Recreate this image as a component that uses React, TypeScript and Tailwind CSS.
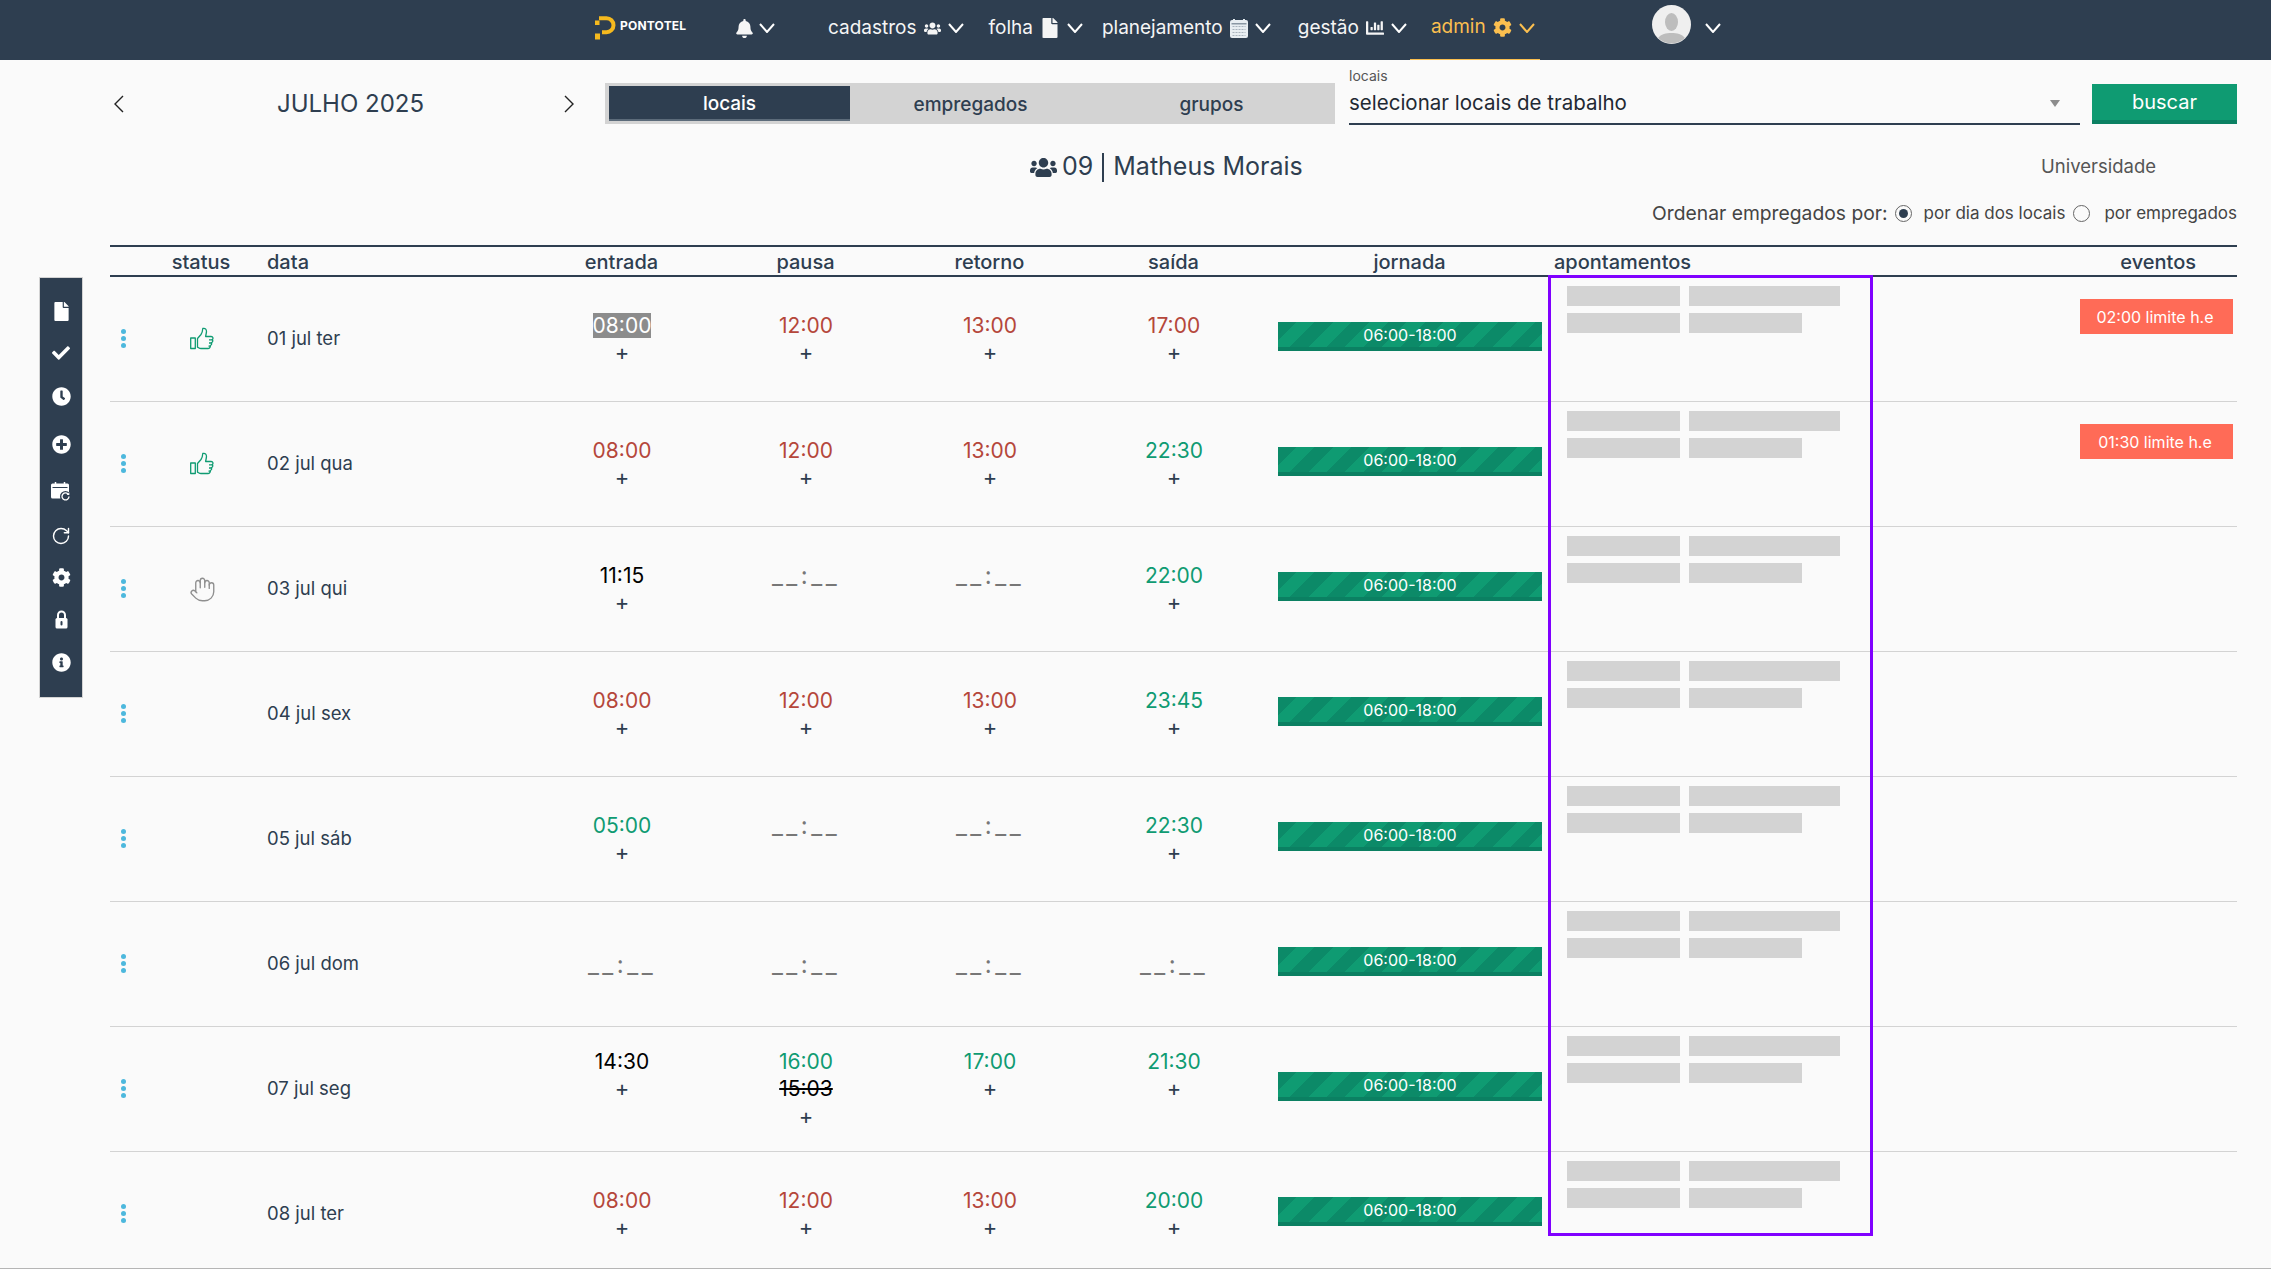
import { Hand, RotateCw } from "lucide-react";
import {
  FaBell,
  FaChartBar,
  FaCheck,
  FaClock,
  FaCog,
  FaFile,
  FaInfoCircle,
  FaPlusCircle,
  FaUsers,
} from "react-icons/fa";

type Tone = "red" | "green" | "black" | "mark" | "none";
type Cell = { t: string; tone: Tone; struck?: string };

const r = (t: string): Cell => ({ t, tone: "red" });
const g = (t: string): Cell => ({ t, tone: "green" });
const k = (t: string): Cell => ({ t, tone: "black" });
const dash: Cell = { t: "__:__", tone: "none" };

const rows: { date: string; status?: "ok" | "hand"; cells: Cell[]; event?: string }[] = [
  { date: "01 jul ter", status: "ok", cells: [{ t: "08:00", tone: "mark" }, r("12:00"), r("13:00"), r("17:00")], event: "02:00 limite h.e" },
  { date: "02 jul qua", status: "ok", cells: [r("08:00"), r("12:00"), r("13:00"), g("22:30")], event: "01:30 limite h.e" },
  { date: "03 jul qui", status: "hand", cells: [k("11:15"), dash, dash, g("22:00")] },
  { date: "04 jul sex", cells: [r("08:00"), r("12:00"), r("13:00"), g("23:45")] },
  { date: "05 jul sáb", cells: [g("05:00"), dash, dash, g("22:30")] },
  { date: "06 jul dom", cells: [dash, dash, dash, dash] },
  { date: "07 jul seg", cells: [k("14:30"), { t: "16:00", tone: "green", struck: "15:03" }, g("17:00"), g("21:30")] },
  { date: "08 jul ter", cells: [r("08:00"), r("12:00"), r("13:00"), g("20:00")] },
];

const toneClass: Record<Tone, string> = {
  red: "text-[#b5473b]",
  green: "text-[#0f9b72]",
  black: "text-black",
  mark: "text-white bg-[#8c8c8c]",
  none: "text-[#777777] text-[24px] tracking-[3.5px]",
};

function Chevron({ className = "text-white" }: { className?: string }) {
  return (
    <svg width="16" height="10" viewBox="0 0 16 10" className={className}>
      <polyline points="1,1 8,9 15,1" fill="none" stroke="currentColor" strokeWidth="2" />
    </svg>
  );
}

function Logo() {
  return (
    <svg width="21" height="24" viewBox="0 0 21 24">
      <path d="M4 2.2H11.5a7 7 0 0 1 0 14H7" fill="none" stroke="#f5b91e" strokeWidth="4" />
      <rect x="0" y="4.5" width="4.5" height="4.5" fill="#f5b91e" />
      <rect x="0" y="17.5" width="5" height="6" fill="#f5b91e" />
    </svg>
  );
}

function Avatar() {
  return (
    <svg width="39" height="39" viewBox="0 0 39 39">
      <circle cx="19.5" cy="19.5" r="19.5" fill="#efefef" />
      <ellipse cx="19.5" cy="17" rx="6.5" ry="9" fill="#bdbdbd" />
      <path d="M6 33c3-4 8-5 13.5-5S30 29 33 33a19.5 19.5 0 0 1-27 0z" fill="#bdbdbd" />
    </svg>
  );
}

function NavCalendar() {
  return (
    <svg width="18" height="19" viewBox="0 0 18 19">
      <rect x="0" y="1" width="18" height="18" rx="2" fill="#e8eef2" />
      <rect x="1.5" y="4" width="15" height="1.5" fill="#8a97a3" />
      <path d="M4 0v3M14 0v3" stroke="#e8eef2" strokeWidth="2" />
      <path
        d="M2.5 7.5h13M2.5 10.5h13M2.5 13.5h13M2.5 16.5h13"
        stroke="#a8b3bd"
        strokeWidth="1"
        strokeDasharray="2 1"
      />
    </svg>
  );
}

function ThumbUp() {
  return (
    <svg width="24" height="24" viewBox="0 0 24 24" fill="none" stroke="#0f9b72" strokeWidth="1.3" strokeLinejoin="round">
      <rect x="0.7" y="11" width="4.6" height="10.5" />
      <path d="M7.5 11.5 11 7.5c1.2-1.6 1.6-3.5 1.8-6 2.6-.6 4 1 3.6 4l-.8 4h5.6c1.8 0 2.4 2 1 3 1 1.2.6 2.6-.8 3.2.6 1.3 0 2.4-1.2 2.8.3 1.6-.6 3-2.3 3H11c-1.5 0-2.3-.8-3.5-1.3z" />
      <path d="M19 12.8h3.2M19 16h2.8M18.5 19.2h2.3" />
    </svg>
  );
}

function NavItem({ label, icon }: { label: string; icon: React.ReactNode }) {
  return (
    <div className="flex items-center gap-[7px] text-[19px] text-[#f5f5f5]">
      <span>{label}</span>
      {icon}
      <Chevron />
    </div>
  );
}

function Sidebar() {
  return (
    <div className="absolute left-[39px] top-[277px] w-[44px] h-[421px] bg-[#2e3e50] border border-[#d3d3d3] flex flex-col items-center text-white">
      <FaFile className="mt-[24px] text-[19px]" />
      <FaCheck className="mt-[23px] text-[18px]" />
      <FaClock className="mt-[25px] text-[19px]" />
      <FaPlusCircle className="mt-[29px] text-[19px]" />
      <svg width="20" height="20" viewBox="0 0 20 20" className="mt-[28px]">
        <rect x="0" y="1.5" width="18" height="15" rx="1.5" fill="white" />
        <rect x="1.5" y="5" width="15" height="1" fill="#2e3e50" />
        <path d="M4.5 0v3M13.5 0v3" stroke="white" strokeWidth="1.5" />
        <circle cx="14.5" cy="14.5" r="5.5" fill="#2e3e50" />
        <path d="M18 14.500a3.500 3.500 0 1 1-1-2.500" fill="none" stroke="white" strokeWidth="1.3" />
        <path d="M18.300 10.300v2.700h-2.700z" fill="white" />
      </svg>
      <RotateCw size={20} strokeWidth={1.7} className="mt-[24px]" />
      <FaCog className="mt-[22px] text-[19px]" />
      <svg width="13" height="19" viewBox="0 0 13 19" className="mt-[23px]">
        <path d="M3 9V5a3.500 3.500 0 0 1 7 0v4" fill="none" stroke="white" strokeWidth="2" />
        <rect x="0.5" y="8" width="12" height="10.5" rx="1.5" fill="white" />
        <rect x="5.5" y="11" width="2" height="4.5" rx="1" fill="#2e3e50" />
      </svg>
      <FaInfoCircle className="mt-[24px] text-[19px]" />
    </div>
  );
}

function Time({ cell }: { cell: Cell }) {
  const isDash = cell.tone === "none";
  return (
    <div className="flex flex-col items-center pl-[2px] leading-[28px] text-[21px]">
      <span className={`h-[25px] leading-[25px] mt-[1.5px] mb-[1.5px] ${toneClass[cell.tone]}`}>{cell.t}</span>
      {cell.struck && <span className="text-black line-through decoration-2">{cell.struck}</span>}
      {!isDash && <span className="text-[#2e3e50] text-[22px] -mt-[1px] mb-[1px]">+</span>}
    </div>
  );
}

function Row({ date, status, cells, event }: (typeof rows)[number]) {
  return (
    <div className="grid grid-cols-[26px_130px_263px_736px_284px_324px_364px] items-center h-[125px] shrink-0 border-b border-[#d3d3d3]">
      <div className="flex flex-col items-center gap-[2px] mb-[2px]">
        <span className="w-[5px] h-[5px] rounded-full bg-[#4db8dd]" />
        <span className="w-[5px] h-[5px] rounded-full bg-[#4db8dd]" />
        <span className="w-[5px] h-[5px] rounded-full bg-[#4db8dd]" />
      </div>
      <div className="flex justify-center pl-[2px]">
        {status === "ok" && <ThumbUp />}
        {status === "hand" && <Hand size={27} strokeWidth={1.2} className="text-[#8f8f8f]" />}
      </div>
      <div className="text-[18.5px] text-[#2e3e50] pl-[1px]">{date}</div>
      <div className="grid grid-cols-4 items-start">
        {cells.map((c, i) => (
          <Time key={i} cell={c} />
        ))}
      </div>
      <div className="self-start mt-[45px] ml-[13px] w-[264px] h-[29px] border-b-4 border-[#0b8062] flex items-center justify-center text-[16px] text-white bg-[repeating-linear-gradient(135deg,#0c8a68_0,#0c8a68_13px,#0f9b72_13px,#0f9b72_26px)]">
        06:00-18:00
      </div>
      <div className="self-start mt-[9px] ml-[18px] flex flex-col gap-[7px]">
        <div className="flex gap-[9px]">
          <div className="w-[113px] h-[20px] bg-[#d3d3d3]" />
          <div className="w-[151px] h-[20px] bg-[#d3d3d3]" />
        </div>
        <div className="flex gap-[9px]">
          <div className="w-[113px] h-[20px] bg-[#d3d3d3]" />
          <div className="w-[113px] h-[20px] bg-[#d3d3d3]" />
        </div>
      </div>
      <div className="self-start flex justify-end pr-[4px] mt-[22px]">
        {event && (
          <div className="w-[153px] h-[35px] pr-[3px] bg-[#ff6b57] flex items-center justify-center text-[16px] text-white">
            {event}
          </div>
        )}
      </div>
    </div>
  );
}

export default function App() {
  return (
    <div className="relative h-[1269px] overflow-hidden flex flex-col bg-[#fafafa] border-b border-[#b5b5b5] font-[Inter,sans-serif] text-[#2e3e50]">
      {/* top nav */}
      <header className="h-[60px] shrink-0 bg-[#2e3e50] flex items-center pl-[595px] pb-[4px]">
        <div className="flex items-center gap-[4px] w-[140px]">
          <Logo />
          <span className="mb-[4px] text-[12px] font-bold text-white tracking-[0.2px]">PONTOTEL</span>
        </div>
        <div className="flex items-center gap-[5px] w-[93px] text-white">
          <FaBell className="text-[19px] text-[#f5f5f5]" />
          <Chevron />
        </div>
        <NavItem label="cadastros" icon={<FaUsers className="text-[17px]" />} />
        <div className="ml-[25px]">
          <NavItem label="folha" icon={<FaFile className="text-[20px]" />} />
        </div>
        <div className="ml-[19px]">
          <NavItem label="planejamento" icon={<NavCalendar />} />
        </div>
        <div className="ml-[27px]">
          <NavItem label="gestão" icon={<FaChartBar className="text-[18px]" />} />
        </div>
        <div className="ml-[3px] self-start h-[60px] pb-[4px] pl-[21px] pr-[5px] flex items-center gap-[7px] text-[19px] text-[#fbbf4f] border-b border-[#fbbf4f]">
          <span>admin</span>
          <FaCog className="text-[19px]" />
          <Chevron className="text-[#fbbf4f]" />
        </div>
        <div className="ml-[112px] mb-[7px]">
          <Avatar />
        </div>
        <div className="ml-[14px]">
          <Chevron />
        </div>
      </header>

      <Sidebar />

      <main className="flex flex-col flex-1 min-h-0 pl-[110px] pr-[34px]">
        {/* month + tabs + filter */}
        <div className="flex items-end mt-[8px] h-[57px]">
          <div className="flex items-center justify-between w-[495px] h-[41px] mb-[1px] pl-[4px] pr-[31px]">
            <svg width="10" height="18" viewBox="0 0 10 18">
              <polyline points="9,1 1,9 9,17" fill="none" stroke="#222222" strokeWidth="1.4" />
            </svg>
            <span className="text-[24px] text-[#2e3e50] pl-[13px]">JULHO 2025</span>
            <svg width="10" height="18" viewBox="0 0 10 18">
              <polyline points="1,1 9,9 1,17" fill="none" stroke="#222222" strokeWidth="1.4" />
            </svg>
          </div>
          <div className="flex w-[730px] h-[41px] mb-[1px] pl-[4px] pr-[3px] py-[3px] bg-[#d3d3d3] text-[19px] font-medium">
            <div className="w-[241px] flex items-center justify-center pt-[3px] bg-[#2e3e50] text-white border-b-2 border-[#5c6b7a]">locais</div>
            <div className="w-[241px] flex items-center justify-center pt-[3px]">empregados</div>
            <div className="w-[241px] flex items-center justify-center pt-[3px]">grupos</div>
          </div>
          <div className="ml-[14px] w-[731px]">
            <div className="h-[16px] leading-[16px] text-[14px] text-[#555555]">locais</div>
            <div className="h-[41px] flex items-center justify-between pr-[20px] pb-[1px] border-b-2 border-[#2e3e50] text-[20.5px] text-[#1f2933]">
              <span>selecionar locais de trabalho</span>
              <span className="w-0 h-0 border-x-[5.5px] border-x-transparent border-t-[7px] border-t-[#8c8c8c]" />
            </div>
          </div>
          <div className="ml-[12px] w-[145px] h-[40px] mb-[1px] flex items-center justify-center bg-[#0f9b72] border-b-4 border-[#0b8062] text-[20px] text-white">
            buscar
          </div>
        </div>

        {/* employee */}
        <div className="flex items-center h-[44px] mt-[20px]">
          <div className="flex items-center ml-[920px] text-[25px]">
            <FaUsers className="text-[27px] mr-[5px]" />
            <span>09</span>
            <span className="w-[2px] h-[29px] bg-[#2e3e50] mx-[9px]" />
            <span>Matheus Morais</span>
          </div>
          <span className="ml-auto mr-[81px] text-[18.5px] text-[#555555]">Universidade</span>
        </div>

        {/* sort */}
        <div className="flex items-center justify-end h-[36px] mt-[6px] mb-[14px] text-[#444444]">
          <span className="text-[19.3px]">Ordenar empregados por:</span>
          <span className="ml-[7px] w-[17px] h-[17px] rounded-full border border-[#666666] flex items-center justify-center">
            <span className="w-[9px] h-[9px] rounded-full bg-[#2e3e50]" />
          </span>
          <span className="ml-[12px] mt-[1px] text-[17px]">por dia dos locais</span>
          <span className="ml-[8px] w-[17px] h-[17px] rounded-full border border-[#666666]" />
          <span className="ml-[14px] mt-[1px] text-[17px]">por empregados</span>
        </div>

        {/* table */}
        <div className="flex flex-col flex-1 min-h-0 overflow-hidden">
          <div className="grid grid-cols-[26px_130px_263px_184px_184px_184px_184px_284px_324px_364px] items-center h-[32px] shrink-0 border-y-2 border-[#2e3e50] text-[20px] font-medium">
            <div />
            <div className="text-center">status</div>
            <div className="pl-[1px]">data</div>
            <div className="text-center pl-[1px]">entrada</div>
            <div className="text-center pl-[1px]">pausa</div>
            <div className="text-center pl-[1px]">retorno</div>
            <div className="text-center pl-[1px]">saída</div>
            <div className="text-center pl-[5px]">jornada</div>
            <div className="pl-[5px]">apontamentos</div>
            <div className="text-right pr-[41px]">eventos</div>
          </div>
          {rows.map((row) => (
            <Row key={row.date} {...row} />
          ))}
        </div>
      </main>

      {/* purple selection box drawn over the table */}
      <div className="absolute left-[1548px] top-[275px] w-[325px] h-[961px] border-[3px] border-[#8000ff] pointer-events-none" />
    </div>
  );
}
